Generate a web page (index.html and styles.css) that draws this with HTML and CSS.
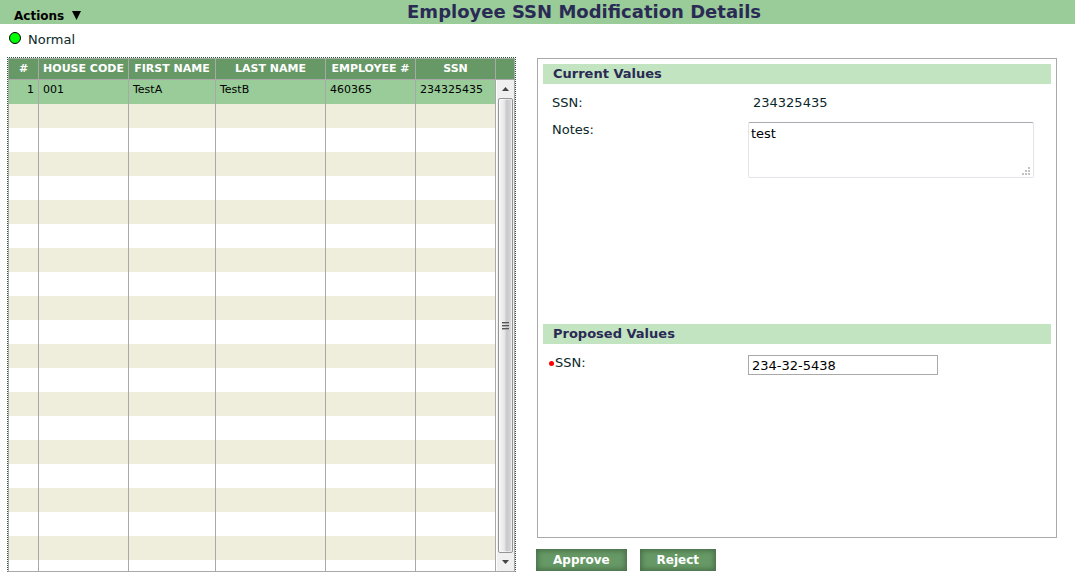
FILE: index.html
```html
<!DOCTYPE html>
<html lang="en">
<head>
<meta charset="utf-8">
<title>Employee SSN Modification Details</title>
<link rel="stylesheet" href="styles.css">
</head>
<body>
<header class="topbar">
  <button class="actions" type="button">Actions
    <svg width="9" height="9" viewBox="0 0 9 9" aria-hidden="true"><path d="M0 0h9L4.500 9z"/></svg>
  </button>
  <h1 class="title">Employee SSN Modification Details</h1>
</header>
<div class="status"><span class="status-light"></span>Normal</div>
<main class="content">
  <section class="grid">
    <table class="grid-table">
      <colgroup><col class="col-num"><col class="col-house"><col class="col-first"><col class="col-last"><col class="col-emp"><col class="col-ssn"><col></colgroup>
      <thead>
        <tr><th>#</th><th>HOUSE CODE</th><th>FIRST NAME</th><th>LAST NAME</th><th>EMPLOYEE #</th><th>SSN</th><th></th></tr>
      </thead>
      <tbody>
        <tr class="selected"><td class="num">1</td><td>001</td><td>TestA</td><td>TestB</td><td>460365</td><td>234325435</td><td></td></tr>
        <tr><td></td><td></td><td></td><td></td><td></td><td></td><td></td></tr>
        <tr><td></td><td></td><td></td><td></td><td></td><td></td><td></td></tr>
        <tr><td></td><td></td><td></td><td></td><td></td><td></td><td></td></tr>
        <tr><td></td><td></td><td></td><td></td><td></td><td></td><td></td></tr>
        <tr><td></td><td></td><td></td><td></td><td></td><td></td><td></td></tr>
        <tr><td></td><td></td><td></td><td></td><td></td><td></td><td></td></tr>
        <tr><td></td><td></td><td></td><td></td><td></td><td></td><td></td></tr>
        <tr><td></td><td></td><td></td><td></td><td></td><td></td><td></td></tr>
        <tr><td></td><td></td><td></td><td></td><td></td><td></td><td></td></tr>
        <tr><td></td><td></td><td></td><td></td><td></td><td></td><td></td></tr>
        <tr><td></td><td></td><td></td><td></td><td></td><td></td><td></td></tr>
        <tr><td></td><td></td><td></td><td></td><td></td><td></td><td></td></tr>
        <tr><td></td><td></td><td></td><td></td><td></td><td></td><td></td></tr>
        <tr><td></td><td></td><td></td><td></td><td></td><td></td><td></td></tr>
        <tr><td></td><td></td><td></td><td></td><td></td><td></td><td></td></tr>
        <tr><td></td><td></td><td></td><td></td><td></td><td></td><td></td></tr>
        <tr><td></td><td></td><td></td><td></td><td></td><td></td><td></td></tr>
        <tr><td></td><td></td><td></td><td></td><td></td><td></td><td></td></tr>
        <tr><td></td><td></td><td></td><td></td><td></td><td></td><td></td></tr>
        <tr><td></td><td></td><td></td><td></td><td></td><td></td><td></td></tr>
      </tbody>
    </table>
    <div class="scrollbar" aria-hidden="true">
      <svg class="arrow" width="7" height="4" viewBox="0 0 7 4"><path d="M0 4L3.500 0 7 4z"/></svg>
      <div class="thumb">
        <svg width="7" height="8" viewBox="0 0 7 8" shape-rendering="crispEdges"><path fill="#555" d="M0 0h7v1H0zM0 3h7v1H0zM0 6h7v1H0z"/><path fill="#aaa" d="M0 1h7v1H0zM0 4h7v1H0zM0 7h7v1H0z"/></svg>
      </div>
      <svg class="arrow" width="7" height="4" viewBox="0 0 7 4"><path d="M0 0L3.500 4 7 0z"/></svg>
    </div>
  </section>
  <form class="details">
    <div class="panel">
      <section class="group">
        <h2 class="group-title">Current Values</h2>
        <div class="field"><span class="label">SSN:</span><span class="value">234325435</span></div>
        <div class="field">
          <label class="label" for="notes">Notes:</label>
          <div class="notes-box">
            <textarea class="notes" id="notes">test</textarea>
            <svg class="grip" width="8" height="8" viewBox="0 0 8 8" shape-rendering="crispEdges" aria-hidden="true"><path d="M6 0h2v2H6zM3 3h2v2H3zM6 3h2v2H6zM0 6h2v2H0zM3 6h2v2H3zM6 6h2v2H6z"/></svg>
          </div>
        </div>
      </section>
      <section class="group">
        <h2 class="group-title">Proposed Values</h2>
        <div class="field required"><label class="label" for="ssn"><span class="dot"></span>SSN:</label><input class="ssn" id="ssn" type="text" value="234-32-5438"></div>
      </section>
    </div>
    <div class="buttons">
      <button class="btn" type="button">Approve</button>
      <button class="btn" type="button">Reject</button>
    </div>
  </form>
</main>
</body>
</html>
```
FILE: styles.css
```css
* { box-sizing: border-box; }

body {
  margin: 0;
  height: 100vh;
  min-height: 400px;
  display: flex;
  flex-direction: column;
  background: #fff;
  color: #0a2828;
  font: 13px/16px Verdana, "DejaVu Sans", sans-serif;
}

.topbar {
  flex: none;
  display: flex;
  height: 24px;
  padding-left: 14px;
  background: #9c9;
}
.actions {
  display: flex;
  align-items: center;
  gap: 8px;
  padding: 7px 0 0;
  border: 0;
  background: none;
  color: #000;
  font: bold 12px/16px Verdana, "DejaVu Sans", sans-serif;
}
.title {
  flex: 1;
  margin: 0;
  padding-left: 12px;
  text-align: center;
  color: #2a2a55;
  font-size: 18px;
  line-height: 24px;
}

.status {
  flex: none;
  display: flex;
  gap: 7px;
  height: 33px;
  padding: 8px 0 0 9px;
}
.status-light {
  width: 12px;
  height: 12px;
  border: 1px solid #000;
  border-radius: 50%;
  background: #0f0;
}

.content {
  flex: 1;
  min-height: 0;
  display: grid;
  grid-template-columns: minmax(0, 509fr) minmax(0, 521fr);
  gap: 20px;
  padding: 0 18px 13px 7px;
}

.grid {
  position: relative;
  min-height: 0;
  overflow: hidden;
  border: 1px dotted #253;
  border-bottom: 1px solid #a9a9a9;
}
.grid-table {
  width: 100%;
  border: 1px solid #a9a9a9;
  border-bottom: 0;
  border-collapse: separate;
  border-spacing: 0;
  table-layout: fixed;
  color: #000;
  font-size: 11px;
  line-height: 14px;
}
.col-num { width: 30px; }
.col-house, .col-emp { width: 90px; }
.col-first { width: 87px; }
.col-last { width: 110px; }
.col-ssn { width: 80px; }
.grid-table th {
  height: 21px;
  padding: 0;
  border-right: 1px solid #a9a9a9;
  border-bottom: 1px solid #a9a9a9;
  background: #696;
  color: #fff;
  white-space: nowrap;
}
.grid-table td {
  height: 24px;
  padding: 3px 4px;
  border-right: 1px solid #a9a9a9;
  vertical-align: top;
}
.grid-table th:last-child, .grid-table td:last-child { border-right: 0; }
.grid-table .num { text-align: right; }
.grid-table tr:nth-child(even) td:not(:last-child) { background: #efeddc; }
.grid-table .selected td:not(:last-child) { background: #9c9; }

.scrollbar {
  position: absolute;
  top: 22px;
  right: 1px;
  bottom: 0;
  width: 17px;
  display: flex;
  flex-direction: column;
  align-items: center;
  background: #f0f0f0;
}
.arrow { margin: 7px 0; fill: #444; }
.thumb {
  flex: 1;
  width: 15px;
  display: flex;
  align-items: center;
  justify-content: center;
  border: 1px solid #949494;
  border-radius: 2px;
  background: linear-gradient(90deg, #f6f6f6, #e8e8ea 40%, #c7c7cb 60%, #dcdcde);
  box-shadow: inset 0 0 0 1px #fff8;
}

.details {
  min-height: 0;
  display: flex;
  flex-direction: column;
  gap: 11px;
  padding: 1px 0;
}
.panel {
  flex: 1;
  margin-left: 1px;
  padding: 5px;
  border: 1px solid #a9a9a9;
}
.group { min-height: 260px; }
.group:last-child { min-height: 0; }
.group-title {
  margin: 0 0 11px;
  padding-left: 10px;
  background: #c3e4c0;
  color: #2a2a55;
  font-size: 13px;
  line-height: 20px;
}
.field {
  display: flex;
  align-items: flex-start;
  padding: 0 17px 11px 9px;
}
.label { flex: none; width: 196px; }
.value { padding-left: 5px; }
.required { padding-left: 6px; }
.required .label { width: 199px; }
.dot {
  display: inline-block;
  width: 5px;
  height: 5px;
  margin-right: 1px;
  border-radius: 50%;
  background: #f00;
  vertical-align: 1px;
}
.notes-box { position: relative; flex: 1; display: flex; }
.notes {
  width: 100%;
  height: 56px;
  padding: 3px 2px;
  border: 1px solid #e3e3ec;
  border-top-color: #a9abb0;
  border-radius: 2px;
  resize: none;
  color: #000;
  font: inherit;
}
.grip { position: absolute; right: 4px; bottom: 3px; fill: #c2c2c2; }
.ssn {
  width: 190px;
  height: 20px;
  padding: 1px 3px 0;
  border: 1px solid #a9a9a9;
  color: #000;
  font: inherit;
}

.buttons { flex: none; display: flex; gap: 13px; }
.btn {
  height: 22px;
  padding: 0 17px;
  border: 0;
  background: #696;
  box-shadow: inset 0 0 5px 2px #4a7049;
  color: #fff;
  font: bold 12px/22px Verdana, "DejaVu Sans", sans-serif;
}
```
